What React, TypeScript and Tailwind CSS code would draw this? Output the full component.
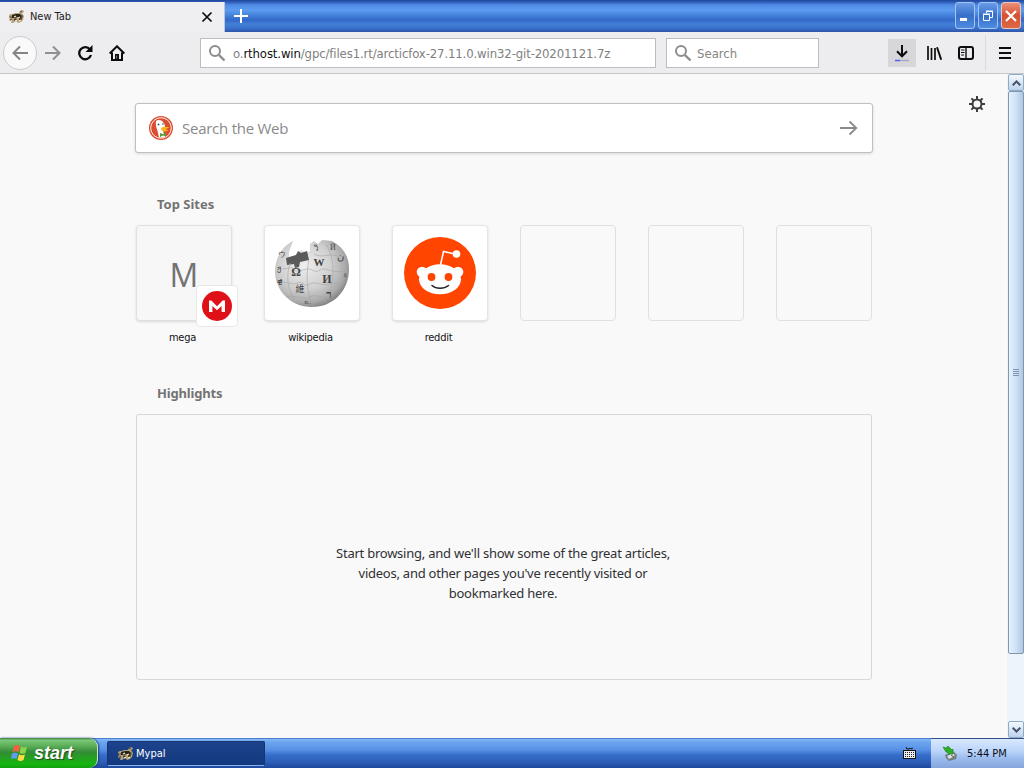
import React from 'react';

const tahoma = "font-['DejaVu_Sans_Condensed','DejaVu_Sans',sans-serif] [font-stretch:condensed]";
const noto = "font-['Noto_Sans',sans-serif]";

function MypalIcon({ className }: { className?: string }) {
  return (
    <svg className={className} width="16" height="16" viewBox="0 0 16 16">
      <path d="M0 6l2-1 2 0 2-1 4 0 1-2 3-1 1 2-2 1 2 3-1 4-2 2-3 1-2-2-3 2-2 0 1-3-2 1-1-1 1-2z" fill="#b3a37c" />
      <path d="M3 6l4-1 4 0 2 2-1 3-3-2-4 1-2 0z" fill="#29241a" />
      <path d="M5 10l2-1 1 2-3 1M10 9l3 0-1 3-2-1z" fill="#4a3b22" />
      <path d="M0 8h3M11 3l2-1M13 6v3M1 11l2-1" stroke="#5a4a2d" strokeWidth="1" />
      <path d="M5 8l2-1M9 9l2-1M6 12l2-1M10 12l2-1" stroke="#f4ead0" strokeWidth="1.100" />
    </svg>
  );
}

function SearchGlyph({ className }: { className?: string }) {
  return (
    <svg className={className} width="18" height="18" viewBox="0 0 18 18" fill="none" stroke="#8d8d8d">
      <circle cx="7" cy="7" r="5" strokeWidth="2" />
      <path d="M10.800 10.800L16.500 16.500" strokeWidth="2.400" />
    </svg>
  );
}

function TitleBar() {
  return (
    <header className="flex h-8 bg-[linear-gradient(180deg,#1f489c_0px,#2e5cb8_2px,#4f8be4_5px,#5b9cf0_10px,#4684dc_15px,#3368c8_20px,#4280d8_24px,#3a72cc_28px,#2c55a8_32px)]">
      <div className="mt-0.5 flex h-[30px] w-[225px] shrink-0 items-center border-r border-[#b9c5dd] bg-[#efeef0] pl-[9px]">
        <MypalIcon />
        <span className={`${tahoma} ml-[5px] pt-px text-[11px] tracking-[-0.05px] text-[#222]`}>New Tab</span>
        <svg className="ml-auto mr-[11px]" width="12" height="12" viewBox="0 0 12 12" stroke="#0c0c0d" strokeWidth="1.700">
          <path d="M1.500 1.500l9 9M10.500 1.500l-9 9" />
        </svg>
      </div>
      <svg className="ml-2 mt-2" width="16" height="16" viewBox="0 0 16 16" stroke="#fff" strokeWidth="2">
        <path d="M8 1v14M1 8h14" />
      </svg>
      <div className="ml-auto mt-0.5 flex gap-[3px] pr-[3px]">
        <div className="h-[27px] w-5 rounded-[3px] border border-[#a4c2f2] bg-linear-to-b from-[#699ce8] via-[#386fc8] to-[#4d8ce0]">
          <svg width="18" height="25" viewBox="0 0 18 25"><path d="M4 15h7v3H4z" fill="#fff" /></svg>
        </div>
        <div className="h-[27px] w-5 rounded-[3px] border border-[#a4c2f2] bg-linear-to-b from-[#699ce8] via-[#386fc8] to-[#4d8ce0]">
          <svg width="18" height="25" viewBox="0 0 18 25" fill="none" stroke="#fff">
            <path d="M7.500 10V8.500h6v6h-2.500M7 8h7" /><path d="M4.500 11.500h6v6h-6zM4 11h7" />
          </svg>
        </div>
        <div className="h-[27px] w-5 rounded-[3px] border border-[#f0c4bc] bg-linear-to-b from-[#e89078] via-[#d8502c] to-[#dc6848]">
          <svg width="18" height="25" viewBox="0 0 18 25" stroke="#fff" strokeWidth="2.200"><path d="M4 8l10 10M14 8L4 18" /></svg>
        </div>
      </div>
    </header>
  );
}

function NavBar() {
  return (
    <nav className="flex h-[42px] items-center border-b border-[#c6c6c8] bg-[#ededef]">
      <div className="ml-[3px] flex size-[34px] shrink-0 items-center justify-center rounded-full border border-[#cbcbcd] bg-[#f9f9fa]">
        <svg width="16" height="16" viewBox="0 0 16 16" fill="none" stroke="#858588" strokeWidth="2"><path d="M16 8H1.500M8 1.500L1.500 8L8 14.500" /></svg>
      </div>
      <svg className="ml-2 shrink-0" width="16" height="16" viewBox="0 0 16 16" fill="none" stroke="#8f8f92" strokeWidth="2"><path d="M0 8h14.500M8 1.500L14.500 8L8 14.500" /></svg>
      <svg className="ml-4 shrink-0" width="16" height="16" viewBox="0 0 16 16" fill="none" stroke="#0c0c0d" strokeWidth="2.300">
        <path d="M13 4.500A6 6 0 1 0 14 10" /><path d="M15.500 0v7h-7z" fill="#0c0c0d" stroke="none" />
      </svg>
      <svg className="ml-4 shrink-0" width="16" height="16" viewBox="0 0 16 16" fill="none" stroke="#0c0c0d" strokeWidth="2">
        <path d="M.7 8.500L8 1.300l7.300 7.200M3 7.500V15h10V7.500" /><path d="M6 9h4v6H6z" fill="#0c0c0d" stroke="none" /><path d="M7.700 10.500v3" stroke="#aaa" strokeWidth=".8" />
      </svg>
      <div className="ml-[75px] flex h-[30px] w-[456px] shrink-0 items-center border border-[#bdbdbf] bg-white pl-[7px]">
        <SearchGlyph />
        <span className={`${tahoma} ml-[7px] whitespace-nowrap pt-[2px] text-[13px] tracking-[-0.12px] text-[#808080]`}>o.<span className="text-[#111]">rthost.win</span>/gpc/files1.rt/arcticfox-27.11.0.win32-git-20201121.7z</span>
      </div>
      <div className="ml-2.5 flex h-[30px] w-[153px] shrink-0 items-center border border-[#bdbdbf] bg-white pl-[7px]">
        <SearchGlyph />
        <span className={`${tahoma} ml-[5px] pt-[2px] text-[13px] text-[#858585]`}>Search</span>
      </div>
      <div className="ml-auto flex h-full items-center">
        <div className="mr-2.5 flex h-7 w-7 items-center justify-center bg-[#d7d7d9]">
          <svg width="16" height="18" viewBox="0 0 16 18" fill="none" stroke="#0c0c0d" strokeWidth="2"><path d="M8 1v11M3 7.300l5 5 5-5" /><path d="M1 16.500h14" stroke="#a5a5c4" strokeWidth="1.400" /><path d="M1 16.500h5" stroke="#5360ef" strokeWidth="1.400" /></svg>
        </div>
        <svg width="16" height="16" viewBox="0 0 16 16" fill="none" stroke="#0c0c0d" strokeWidth="2"><path d="M2 1v14M5.500 3v12M9 3v12" strokeWidth="1.700" /><path d="M11 2.300l4.200 12.400" strokeWidth="1.900" /></svg>
        <svg className="ml-4" width="16" height="16" viewBox="0 0 16 16" fill="none" stroke="#0c0c0d"><rect x="1" y="2" width="14" height="12" rx="2" strokeWidth="2" /><path d="M8 2v12" strokeWidth="1.400" /><path d="M3 5h3.500M3 7.500h3.500M3 10h3" strokeWidth="1" /></svg>
        <div className="ml-[11px] h-[35px] w-px bg-[#dadadc]" />
        <svg className="ml-3 mr-3" width="14" height="14" viewBox="0 0 14 14" stroke="#0c0c0d" strokeWidth="2"><path d="M1 2h12M1 7h12M1 12h12" /></svg>
      </div>
    </nav>
  );
}

function DuckLogo() {
  return (
    <svg width="24" height="24" viewBox="0 0 24 24">
      <circle cx="12" cy="12" r="12" fill="#dc4c30" /><circle cx="12" cy="12" r="10.300" fill="none" stroke="#fff0e8" strokeWidth="1" />
      <path d="M7 5c2-2 6-1 7 1 2 2 2 4 2 6l-2 3 2 6c-2 .8-5 .7-6 .3L8.500 15C7 11 6.500 8 7 5z" fill="#fff" />
      <path d="M12 12c3-2 5-1 8.500-1l-4 2.500 3 .5c-2 2-5 1.500-7 .5z" fill="#f8b51c" />
      <path d="M11 17l3 1 3-1.500v4l-3-1-3 1.500z" fill="#5c9e3e" />
      <circle cx="9.500" cy="8.500" r=".9" fill="#334f68" /><circle cx="14" cy="8" r=".8" fill="#334f68" />
    </svg>
  );
}

function WikipediaGlobe() {
  return (
    <svg className="mt-[3px]" width="76" height="76" viewBox="0 0 76 76">
      <defs>
        <radialGradient id="globe" cx=".4" cy=".38" r=".65">
          <stop offset="0" stopColor="#eeeeee" /><stop offset=".55" stopColor="#d0d0d0" /><stop offset=".85" stopColor="#aaa" /><stop offset="1" stopColor="#808080" />
        </radialGradient>
      </defs>
      <path d="M19 4L15 15l0 5 9-2 3-5 5 3 4-2 0-7 4-3 4 3 4-4 10 1c11 6 17 15 17 28C75 54 59 70 38 70S1 54 1 34C1 20 9 9 19 4z" fill="url(#globe)" />
      <path d="M12 21l10-3 2-4 3 2 6-2 2 9-9 2-1 5-4 1-1-4-7 1z" fill="#5a5a5a" />
      <g fill="none" stroke="#a5a5a5" strokeWidth=".6">
        <path d="M16 26c-4 13-3 28 6 39M35 23c-3 13-3 31 4 47M52 7c10 17 9 39-1 59M4 31c9 3 13-3 15 1s9 1 14 0 8 5 13 1 10 4 25 1M5 47c9-4 13 2 18-1s8 5 13 1 13 3 19 0 10 2 15-1M13 60c8-3 17 4 23 0s11 3 23-1M40 17c8 5 16-2 26 3" />
      </g>
      <g fill="#444" className="font-['Liberation_Serif',serif]" textAnchor="middle">
        <text x="22" y="39" fontSize="12" fontWeight="bold">Ω</text><text x="45" y="29" fontSize="11" fontWeight="bold">W</text>
        <text x="53" y="46" fontSize="12" fontWeight="bold">И</text><text x="26" y="55" fontSize="9" className="font-['Noto_Sans_CJK_SC',sans-serif]">維</text>
        <text x="55" y="61" fontSize="11" fontWeight="bold">ר</text><text x="66" y="23" fontSize="10">ن</text>
        <text x="5" y="34" fontSize="8">ჟ</text><text x="6" y="48" fontSize="8">ዊ</text><text x="42" y="14" fontSize="8">วิ</text><text x="59" y="13" fontSize="8">Й</text><text x="33" y="67" fontSize="8">உ</text><text x="8" y="20" fontSize="8">ウ</text><text x="71" y="40" fontSize="7">ä</text>
      </g>
    </svg>
  );
}

function RedditLogo() {
  return (
    <svg width="72" height="72" viewBox="0 0 72 72">
      <circle cx="36" cy="36" r="36" fill="#ff4500" />
      <path d="M36.500 28L39.500 14.500L51 17" fill="none" stroke="#fff" strokeWidth="1.600" />
      <g fill="#fff"><circle cx="52.500" cy="17" r="3.800" /><circle cx="18" cy="35" r="5.300" /><circle cx="54" cy="35" r="5.300" /><ellipse cx="36" cy="42.300" rx="21" ry="15" /></g>
      <circle cx="27.500" cy="40" r="3.900" fill="#ff4500" /><circle cx="44.500" cy="40" r="3.900" fill="#ff4500" />
      <path d="M28 48.500c4 3.800 12 3.800 16.500 0" fill="none" stroke="#222" strokeWidth="1.500" strokeLinecap="round" />
    </svg>
  );
}

function MegaTile() {
  return (
    <div className="relative flex size-24 items-center justify-center rounded-[4px] border border-[#e0e0e0] bg-[#f7f7f8] shadow-sm">
      <span className="pt-1 font-['Open_Sans',sans-serif] text-[32px] leading-none text-[#737373]">M</span>
      <div className="absolute -bottom-[7px] -right-[7px] flex size-[42px] items-center justify-center rounded-[4px] border border-[#e8e8e8] bg-white">
        <svg width="30" height="30" viewBox="0 0 30 30"><circle cx="15" cy="15" r="15" fill="#df1018" /><path d="M7 21V9.500h2.300L15 15.200l5.700-5.700H23V21h-3.400v-6L15 19.300 10.400 15v6z" fill="#fff" /></svg>
      </div>
    </div>
  );
}

function Site({ label, children }: { label?: string; children?: React.ReactNode }) {
  return (
    <div className="flex w-24 flex-col items-center">
      {children ?? <div className="size-24 rounded-[4px] border border-[#e0e0e1]" />}
      {label && <span className={`${tahoma} mt-[9px] mr-[3px] text-[11px] leading-4 tracking-[-0.25px] text-[#141414]`}>{label}</span>}
    </div>
  );
}

function ScrollButton({ down }: { down?: boolean }) {
  return (
    <div className="flex h-[17px] w-4 items-center justify-center rounded-[2px] border border-[#8eabc4] bg-linear-to-b from-[#f4f9ff] to-[#bed3ec]">
      <svg width="9" height="6" viewBox="0 0 9 6" fill="none" stroke="#455268" strokeWidth="2"><path d={down ? 'M.7.8L4.500 4.500L8.300.8' : 'M.7 5.200L4.500 1.500L8.300 5.200'} /></svg>
    </div>
  );
}

function Taskbar() {
  return (
    <footer className="flex h-[30px] bg-[linear-gradient(180deg,#1f479c_0px,#80b8f8_1px,#6ca6ef_4px,#5790e4_12px,#356dc9_17px,#2d5fb9_24px,#1e479c_30px)]">
      <div className="flex w-[98px] shrink-0 items-center rounded-r-[9px] border-r border-[#cce5bb] bg-[linear-gradient(180deg,#397e39_0px,#7cc77a_2px,#5cae58_8px,#348c38_14px,#279d24_19px,#14b510_26px,#12a010_30px)] pl-[11px] shadow-[1px_0_2px_#173b80]">
        <svg width="18" height="18" viewBox="0 0 18 18">
          <path d="M3 2q3-2 6 0L7.500 8Q4.500 6.500 1.500 8z" fill="#ef623d" /><path d="M10 2.500q3 2 6 0L14.500 9q-3 1.500-6 0z" fill="#8bd648" /><path d="M1 9.500q3-1.500 6 0L5.500 15q-3-1.500-5.500 0z" fill="#629bf2" /><path d="M8 10.500q3 1.500 6 0L12.500 16q-3 2-6 0z" fill="#ffdc42" />
        </svg>
        <span className="ml-[5px] font-['Liberation_Sans',sans-serif] text-[18px] font-bold italic leading-none text-white [text-shadow:1px_1px_1px_#254c20]">start</span>
      </div>
      <div className="ml-[9px] mt-[3px] flex h-[25px] w-[158px] items-center rounded-[2px] border border-[#17346f] border-b-[#8cb2e9] bg-linear-to-b from-[#1d438c] to-[#12387f] pl-2.5">
        <MypalIcon />
        <span className={`${tahoma} ml-[2px] pt-[2px] text-[11px] text-white`}>Mypal</span>
      </div>
      <svg className="ml-auto mr-[14px] mt-[8px]" width="15" height="15" viewBox="0 0 15 15">
        <path d="M4 1l1 2h2l1-1 1 1 2-1" fill="none" stroke="#111" /><rect x="1" y="4" width="13" height="9" fill="#111" /><rect x="2" y="5" width="11" height="7" fill="#eee" /><path d="M3 6.500h10M3 8.500h10M3 10.500h10" stroke="#222" strokeDasharray="1 1" />
      </svg>
      <div className="flex w-[93px] shrink-0 items-center border-t border-[#354f88] bg-[linear-gradient(180deg,#d9e9ff,#b8d2f8_45%,#9dbdef_65%,#86a5dc)] pl-[11px]">
        <svg width="17" height="17" viewBox="0 0 17 17">
          <path d="M3 10l8-4 4 4-1 4-7 2-3-3z" fill="#737c7a" /><path d="M5 11l6-3 2 3-6 3z" fill="#d7e0df" /><path d="M9 10l3 2" stroke="#4d5554" /><path d="M1 2l3 1 2-2 4 4 1-1v5H6l1-1-3-1z" fill="#2fae28" stroke="#217d24" strokeWidth=".6" />
        </svg>
        <span className={`${tahoma} ml-2 whitespace-nowrap pt-px text-[11px] text-[#0b0b18]`}>5:44 PM</span>
      </div>
    </footer>
  );
}

export default function App() {
  return (
    <div className="flex h-[768px] w-[1024px] flex-col overflow-hidden bg-[#f9f9fa]">
      <TitleBar />
      <NavBar />
      <div className="flex h-[664px]">
        <main className="flex flex-1 pl-[135px]">
          <div className="w-[738px] pt-[29px]">
            <div className="flex h-[50px] items-center rounded-[3px] border border-[#c0c0c1] bg-white pl-[13px] pr-[14px] shadow-[0_1px_3px_#00000022]">
              <DuckLogo />
              <span className="ml-[9px] font-['Open_Sans',sans-serif] text-[15px] tracking-[-0.25px] text-[#8a8a8a]">Search the Web</span>
              <svg className="ml-auto" width="18" height="16" viewBox="0 0 18 16" fill="none" stroke="#8b8b8c" strokeWidth="1.800"><path d="M0 8h16M9.500 1.500L16.300 8L9.500 14.500" /></svg>
            </div>
            <h2 className={`${noto} mt-[41px] pl-[22px] text-[13px] font-bold leading-5 text-[#737373]`}>Top Sites</h2>
            <div className="mt-[11px] flex h-[121px] gap-8 pl-px">
              <Site label="mega"><MegaTile /></Site>
              <Site label="wikipedia"><div className="flex size-24 items-center justify-center rounded-[4px] border border-[#e6e6e6] bg-white shadow-sm"><WikipediaGlobe /></div></Site>
              <Site label="reddit"><div className="flex size-24 items-center justify-center rounded-[4px] border border-[#e6e6e6] bg-white shadow-sm"><RedditLogo /></div></Site>
              <Site /><Site /><Site />
            </div>
            <h2 className={`${noto} mt-[37px] pl-[22px] text-[13px] font-bold leading-5 tracking-[-0.17px] text-[#737373]`}>Highlights</h2>
            <div className="mx-px mt-[11px] flex h-[266px] justify-center rounded-[3px] border border-[#d7d7db] pt-[128px]">
              <p className={`${noto} h-fit whitespace-nowrap pr-[2px] text-center text-[13px] leading-5 tracking-[-0.24px] text-[#303033]`}>Start browsing, and we'll show some of the great articles,<br />videos, and other pages you've recently visited or<br />bookmarked here.</p>
            </div>
          </div>
          <svg className="ml-24 mt-[22px] shrink-0" width="16" height="16" viewBox="0 0 16 16" fill="none" stroke="#3d3d40" strokeWidth="2"><circle cx="8" cy="8" r="4.500" /><path d="M8 0v4M8 12v4M0 8h4M12 8h4M2.400 2.400l2.400 2.400M11.200 11.200l2.400 2.400M13.600 2.400l-2.400 2.400M4.800 11.200l-2.400 2.400" /></svg>
        </main>
        <div className="flex w-[17px] flex-col bg-[#edf4fc] pl-px">
          <ScrollButton />
          <div className="flex h-[563px] items-center justify-center rounded-[2px] border border-[#8198aa] bg-linear-to-r from-[#e4f0ff] via-[#cfe1f7] to-[#b0c8e2]">
            <svg width="6" height="8" viewBox="0 0 6 8" stroke="#7d95ad"><path d="M0 .5h6M0 2.500h6M0 4.500h6M0 6.500h6" /></svg>
          </div>
          <div className="mt-auto"><ScrollButton down /></div>
        </div>
      </div>
      <Taskbar />
    </div>
  );
}
